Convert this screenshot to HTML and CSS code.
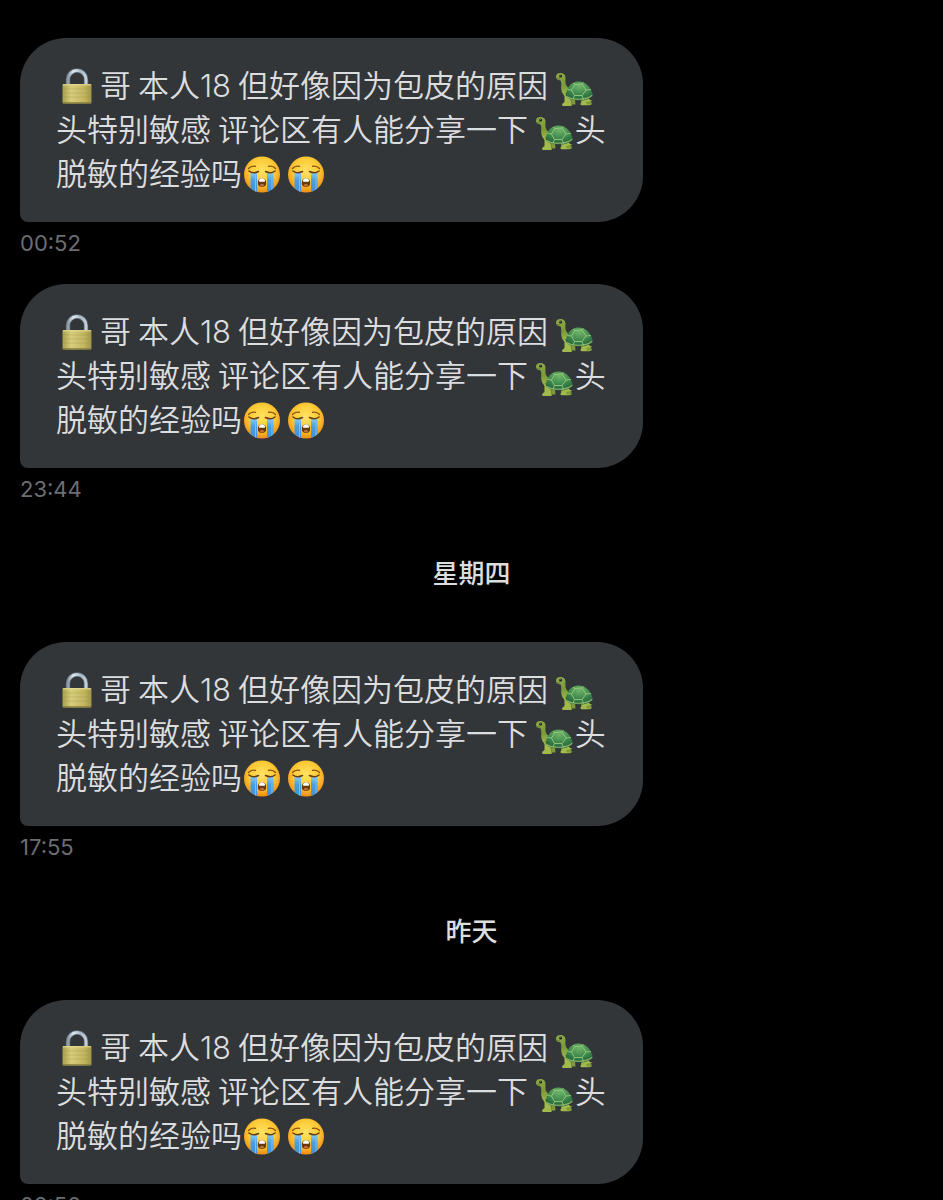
FILE: index.html
```
<!DOCTYPE html>
<html lang="zh-CN">
<head>
    <meta charset="UTF-8">
    <meta name="viewport" content="width=device-width, initial-scale=1.0">
    <title>私信</title>
    <link rel="stylesheet" href="styles.css">
</head>
<body>
    <!-- Emoji shapes shared by all messages -->
    <svg class="sprite" aria-hidden="true">
        <defs>
            <linearGradient id="brass" x1="0" y1="0" x2="1" y2="0">
                <stop offset="0" stop-color="#a8a04c"/>
                <stop offset="0.3" stop-color="#d8cd7c"/>
                <stop offset="0.75" stop-color="#c2b65f"/>
                <stop offset="1" stop-color="#a0954a"/>
            </linearGradient>
            <linearGradient id="steel" x1="0" y1="0" x2="1" y2="0">
                <stop offset="0" stop-color="#8b9aa7"/>
                <stop offset="0.3" stop-color="#e0e8ee"/>
                <stop offset="0.7" stop-color="#a9b9c6"/>
                <stop offset="1" stop-color="#c5d0d9"/>
            </linearGradient>
            <radialGradient id="shell" cx="0.5" cy="0.25" r="0.75">
                <stop offset="0" stop-color="#6fb468"/>
                <stop offset="0.55" stop-color="#3f8a4e"/>
                <stop offset="1" stop-color="#1f6138"/>
            </radialGradient>
            <linearGradient id="skin" x1="0" y1="0" x2="0" y2="1">
                <stop offset="0" stop-color="#8fa84a"/>
                <stop offset="0.5" stop-color="#799a38"/>
                <stop offset="1" stop-color="#a9bd50"/>
            </linearGradient>
            <radialGradient id="face" cx="0.5" cy="0.4" r="0.6">
                <stop offset="0" stop-color="#ffe364"/>
                <stop offset="0.6" stop-color="#fdc934"/>
                <stop offset="1" stop-color="#ee8d16"/>
            </radialGradient>
            <linearGradient id="tear" x1="0" y1="0" x2="0" y2="1">
                <stop offset="0" stop-color="#8fcdf2"/>
                <stop offset="0.4" stop-color="#4a9fe2"/>
                <stop offset="1" stop-color="#3f8fdc"/>
            </linearGradient>
            <clipPath id="face-clip">
                <circle cx="20" cy="22.500" r="18"/>
            </clipPath>
        </defs>

        <symbol id="lock" viewBox="0 -2 44 44">
            <path d="M12 22V15.500a9 9 0 0 1 18 0V22" fill="none" stroke="#5c6975" stroke-width="4.400"/>
            <path d="M12 22V15.500a9 9 0 0 1 18 0V22" fill="none" stroke="url(#steel)" stroke-width="3"/>
            <rect x="6.500" y="20" width="29" height="19.500" rx="1" fill="url(#brass)"/>
            <path d="M7 20.800h28" stroke="#e6dd98" stroke-width="1"/>
            <path d="M7 25h28M7 29h28M7 33h28" stroke="#9c9248" stroke-width="0.500" opacity="0.600"/>
            <path d="M7 38.900h28" stroke="#82783a" stroke-width="1.200"/>
        </symbol>

        <symbol id="turtle" viewBox="0 -2 40 44">
            <path d="M32 34c2 1.500 4 2.500 5.500 2.300c-1 1.400-4 1.500-6 0z" fill="#8fa84a"/>
            <path d="M1 12.500C1 10 3 9 5.500 9c3.500 0 5.200 2.300 5 5.500c-.2 3.500-.4 6.500 3 9.500l3 8-4 1.500c-4.500-2-6.500-6-6.300-10.500c.1-3 .3-5.500-1-6.700C3 16 1 15.500 1 12.500z" fill="url(#skin)"/>
            <path d="M10 29h23l-2 6H13z" fill="#55782f"/>
            <path d="M9.500 31l6 2.500c0 3 .8 4.500 1.300 7c.2 1-.4 1.500-1.500 1.500H8.500c-1.500 0-2-1.500-.8-2.500l1.800-1.500z" fill="#a2ba4c"/>
            <path d="M26 34l7-1.500c.5 2.500 3 4 3.300 6.500c.1 1.500-.7 2.200-2 2.200H27c-1.800 0-2-1.800-.7-2.800z" fill="#a2ba4c"/>
            <path d="M16 35h4l.5 5.500h-4zM31 38l5-1 .8 3.500H32z" fill="#7e9a39"/>
            <path d="M10.800 32c.5-8 4.700-14.300 12.500-14.500c7.500-.1 13 6 14.500 13.500c-3 4.300-8.500 5.800-14.300 5.500c-5.500-.3-10.500-1.500-12.700-4.500z" fill="url(#shell)"/>
            <path d="M11.500 32.200c5 4 20 4.500 25.700-1" fill="none" stroke="#8db26a" stroke-width="1.200"/>
            <g fill="none" stroke="#a6cf83" stroke-width="0.800">
                <path d="M20 20.500l7-.5 4 6-4 5.500h-7.500l-3-5.500zM20 20.500l-2-1.300M27 20l1.500-1.500M31 26l5-.5M27 31.500l1.500 4M19.500 31.500L18 35M16.500 26l-4.200-.5"/>
            </g>
            <circle cx="5.600" cy="12" r="1.500" fill="#1f2a15"/>
            <circle cx="5.200" cy="11.600" r="0.400" fill="#fff"/>
            <path d="M1.800 14.500c1 .6 2.200.6 3.200 0" fill="none" stroke="#536a28" stroke-width="0.700"/>
        </symbol>

        <symbol id="crying" viewBox="0 -2 44 44">
            <circle cx="20" cy="22.500" r="18" fill="url(#face)"/>
            <g clip-path="url(#face-clip)">
                <path d="M8.500 20h6.500v21H8.500zM25 20h6.500v21H25z" fill="url(#tear)"/>
                <path d="M13.500 21v20M30 21v20" stroke="#7cc0ef" stroke-width="1"/>
            </g>
            <path d="M7 19c2.500 2 6.500 2 9.500.5M33 19c-2.500 2-6.500 2-9.500.5" fill="none" stroke="#6a3d0c" stroke-width="1.600" stroke-linecap="round"/>
            <path d="M6.500 16.500c1.500-1.800 4-2.800 7-2.200M33.500 16.500c-1.500-1.800-4-2.800-7-2.200" fill="none" stroke="#8a5413" stroke-width="1.300" stroke-linecap="round"/>
            <path d="M20 26c2.800 0 4.200 2.300 4.200 5c0 2.600-1.700 4-4.200 4s-4.200-1.400-4.200-4c0-2.700 1.400-5 4.200-5z" fill="#6b3808"/>
            <path d="M17 28.200c.7-1.300 1.700-1.900 3-1.900s2.300.6 3 1.900c.3 1.100-.4 1.600-1.100 1.600h-3.800c-.7 0-1.400-.5-1.100-1.600z" fill="#fff"/>
            <ellipse cx="20" cy="33.200" rx="2.200" ry="1.200" fill="#c0703a"/>
        </symbol>
    </svg>

    <main class="chat">
        <article class="message">
            <p class="bubble"><svg class="emoji" role="img" aria-label="锁"><use href="#lock"/></svg>哥 本人<span class="num">18</span> 但好像因为包皮的原因 <svg class="emoji turtle" role="img" aria-label="乌龟"><use href="#turtle"/></svg>头特别敏感 评论区有人能分享一下 <svg class="emoji turtle" role="img" aria-label="乌龟"><use href="#turtle"/></svg>头脱敏的经验吗<svg class="emoji" role="img" aria-label="大哭"><use href="#crying"/></svg><svg class="emoji" role="img" aria-label="大哭"><use href="#crying"/></svg></p>
            <time class="time">00:52</time>
        </article>

        <article class="message">
            <p class="bubble"><svg class="emoji" role="img" aria-label="锁"><use href="#lock"/></svg>哥 本人<span class="num">18</span> 但好像因为包皮的原因 <svg class="emoji turtle" role="img" aria-label="乌龟"><use href="#turtle"/></svg>头特别敏感 评论区有人能分享一下 <svg class="emoji turtle" role="img" aria-label="乌龟"><use href="#turtle"/></svg>头脱敏的经验吗<svg class="emoji" role="img" aria-label="大哭"><use href="#crying"/></svg><svg class="emoji" role="img" aria-label="大哭"><use href="#crying"/></svg></p>
            <time class="time">23:44</time>
        </article>

        <h2 class="day">星期四</h2>

        <article class="message">
            <p class="bubble"><svg class="emoji" role="img" aria-label="锁"><use href="#lock"/></svg>哥 本人<span class="num">18</span> 但好像因为包皮的原因 <svg class="emoji turtle" role="img" aria-label="乌龟"><use href="#turtle"/></svg>头特别敏感 评论区有人能分享一下 <svg class="emoji turtle" role="img" aria-label="乌龟"><use href="#turtle"/></svg>头脱敏的经验吗<svg class="emoji" role="img" aria-label="大哭"><use href="#crying"/></svg><svg class="emoji" role="img" aria-label="大哭"><use href="#crying"/></svg></p>
            <time class="time">17:55</time>
        </article>

        <h2 class="day">昨天</h2>

        <article class="message">
            <p class="bubble"><svg class="emoji" role="img" aria-label="锁"><use href="#lock"/></svg>哥 本人<span class="num">18</span> 但好像因为包皮的原因 <svg class="emoji turtle" role="img" aria-label="乌龟"><use href="#turtle"/></svg>头特别敏感 评论区有人能分享一下 <svg class="emoji turtle" role="img" aria-label="乌龟"><use href="#turtle"/></svg>头脱敏的经验吗<svg class="emoji" role="img" aria-label="大哭"><use href="#crying"/></svg><svg class="emoji" role="img" aria-label="大哭"><use href="#crying"/></svg></p>
            <time class="time">09:50</time>
        </article>
    </main>
</body>
</html>
```

FILE: styles.css
```
* {
    box-sizing: border-box;
}

body {
    margin: 0;
    background-color: #000;
    color: #dcdddf;
    font-family: "Noto Sans CJK SC", sans-serif;
}

.sprite {
    display: block;
    width: 0;
    height: 0;
}

.chat {
    display: flex;
    flex-direction: column;
    height: 100vh;
    padding: 38px 20px 0;
    overflow: hidden;
}

.message {
    display: flex;
    flex-direction: column;
    align-items: flex-start;
    flex-shrink: 0;
    gap: 6px;
    margin-bottom: 26px;
}

.bubble {
    max-width: 623px;
    margin: 0;
    padding: 24px 32px 28px 36px;
    border-radius: 46px 46px 46px 8px;
    background-color: #333639;
    font-size: 31px;
    font-weight: 350;
    line-height: 44px;
}

.num {
    font-family: Inter, sans-serif;
    line-height: 1;
}

.emoji {
    width: 44px;
    height: 44px;
    vertical-align: top;
}

.turtle {
    width: 40px;
}

.time {
    color: #6b6e72;
    font-family: Inter, sans-serif;
    font-size: 22px;
    line-height: 30px;
}

.day {
    flex-shrink: 0;
    margin: 22px 0 50px;
    font-size: 26px;
    font-weight: 500;
    line-height: 40px;
    text-align: center;
}

@media (max-width: 600px) {
    .bubble {
        font-size: 24px;
    }
}
```
